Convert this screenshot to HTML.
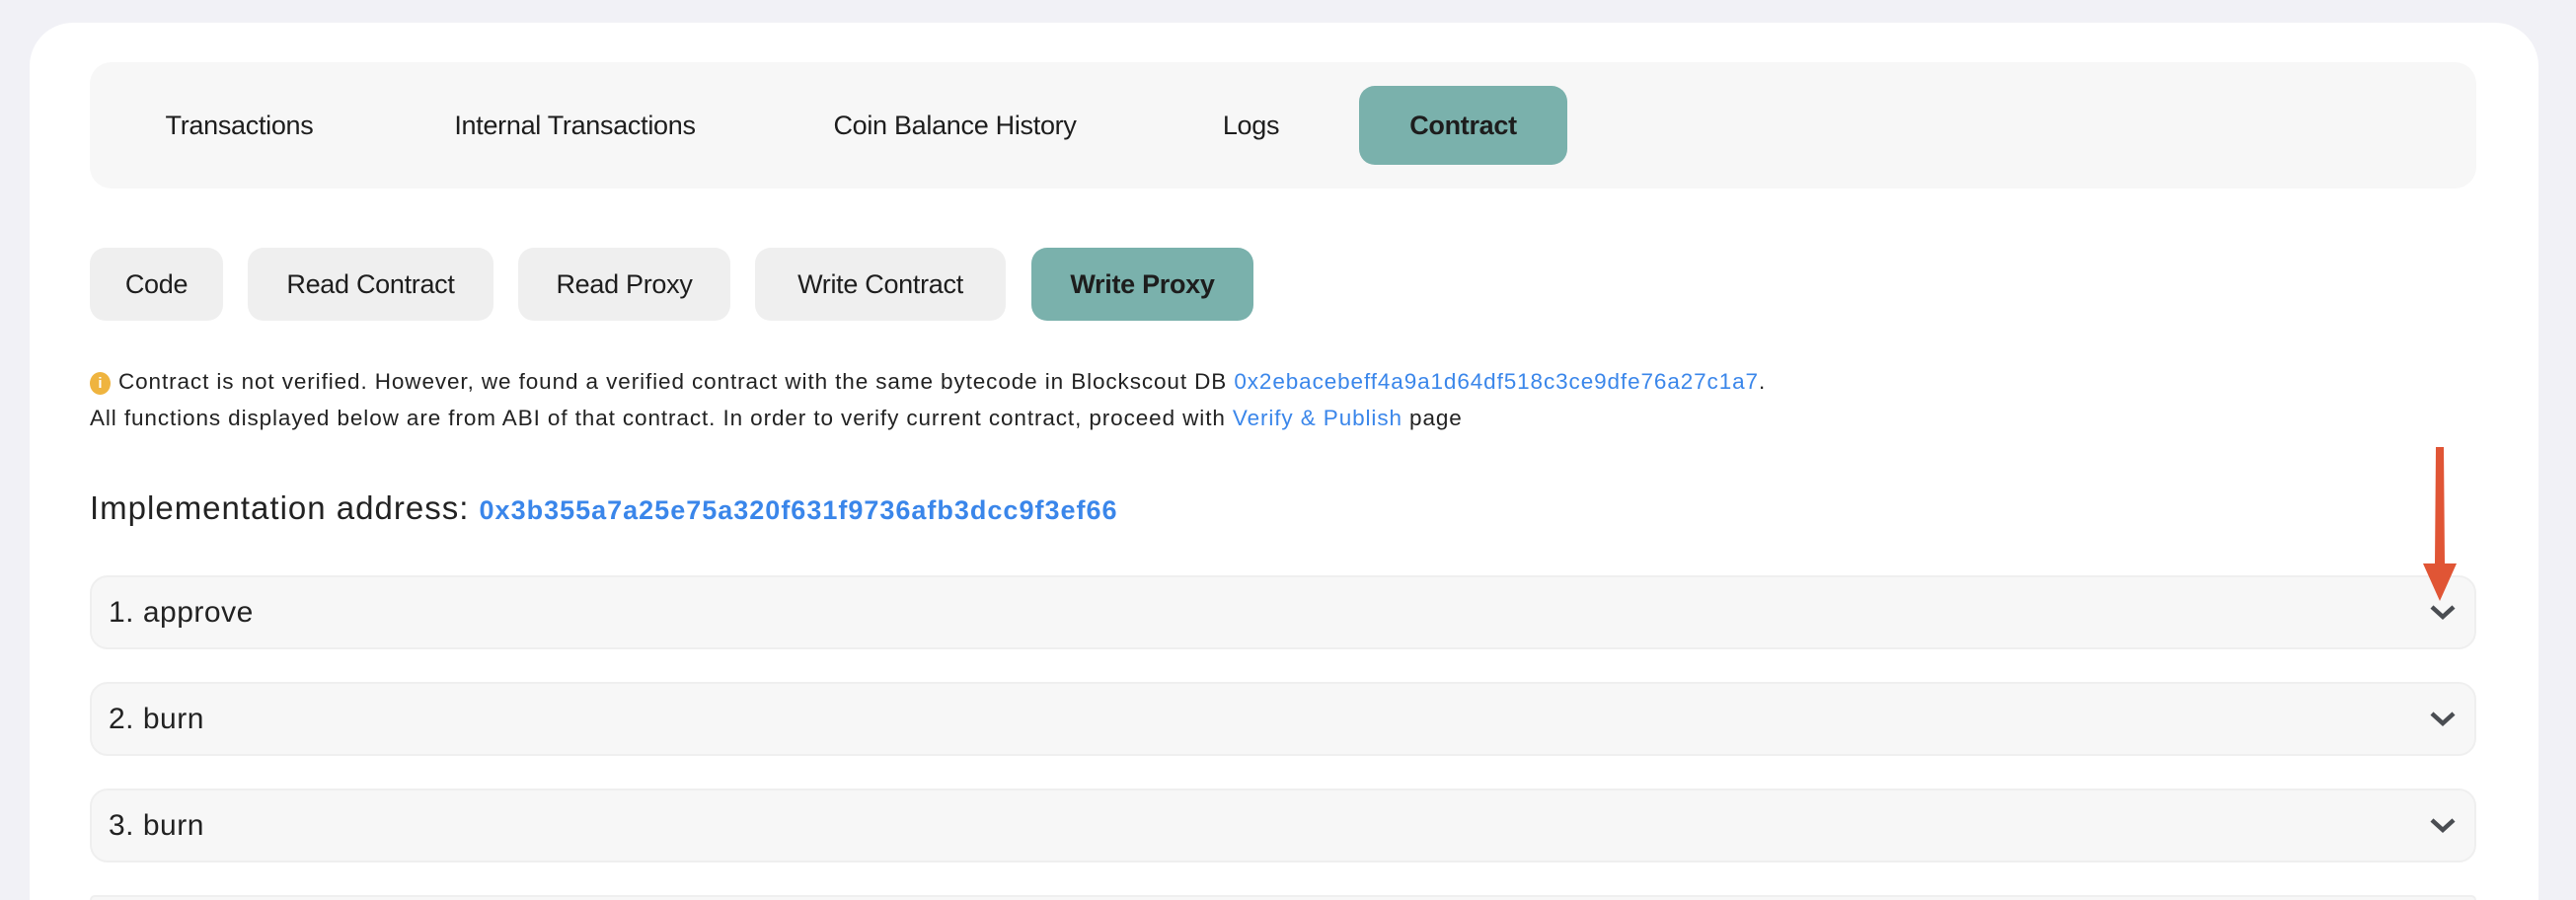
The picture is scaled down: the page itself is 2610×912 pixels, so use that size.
<!DOCTYPE html>
<html style="height:912px;overflow:hidden"><head><meta charset="utf-8"><style>
*{margin:0;padding:0;box-sizing:border-box}
body{width:2610px;height:912px;overflow:hidden;background:#f1f1f6;font-family:"Liberation Sans",sans-serif;color:#222;position:relative}
.card{position:absolute;left:30px;top:23px;width:2542px;height:889px;background:#fff;border-radius:44px 44px 0 0}
.abs{position:absolute}
.bar{left:91px;top:63px;width:2418px;height:128px;background:#f7f7f7;border-radius:22px}
.t{position:absolute;top:87px;height:80px;display:flex;align-items:center;justify-content:center;font-size:27px;color:#1d1d1d;letter-spacing:-0.3px}
.btn{position:absolute;top:251px;height:74px;background:#efefef;border-radius:16px;display:flex;align-items:center;justify-content:center;font-size:27px;color:#1d1d1d;letter-spacing:-0.3px}
.act{background:#7ab1ac;font-weight:bold}
.info{position:absolute;left:91px;font-size:22.5px;color:#222;white-space:nowrap;letter-spacing:0.9px}
a{color:#3a86ea;text-decoration:none}
.acc{position:absolute;left:91px;width:2418px;height:75px;background:#f7f7f7;border:2px solid #efefef;border-radius:18px;overflow:hidden}
.acc span{position:absolute;left:17px;top:0;line-height:71px;font-size:30px;color:#222;letter-spacing:0.5px}
.acc svg{position:absolute;left:2368px;top:25px}
</style></head><body>
<div class="card"></div>
<div class="abs bar"></div>
<div class="t" style="left:150px;width:185px">Transactions</div>
<div class="t" style="left:440px;width:285px">Internal Transactions</div>
<div class="t" style="left:830px;width:275px">Coin Balance History</div>
<div class="t" style="left:1225px;width:85px">Logs</div>
<div class="t act" style="left:1377px;width:211px;border-radius:16px">Contract</div>

<div class="btn" style="left:91px;width:135px">Code</div>
<div class="btn" style="left:251px;width:249px">Read Contract</div>
<div class="btn" style="left:525px;width:215px">Read Proxy</div>
<div class="btn" style="left:765px;width:254px">Write Contract</div>
<div class="btn act" style="left:1045px;width:225px">Write Proxy</div>

<div class="abs" style="left:91px;top:377px;width:21px;height:23px;border-radius:50%;background:#efb43f;color:#fff;font-size:15px;font-weight:bold;text-align:center;line-height:23px">i</div>
<div class="info" style="left:120px;top:374px">Contract is not verified. However, we found a verified contract with the same bytecode in Blockscout DB <a>0x2ebacebeff4a9a1d64df518c3ce9dfe76a27c1a7</a>.</div>
<div class="info" style="top:411px">All functions displayed below are from ABI of that contract. In order to verify current contract, proceed with <a>Verify &amp; Publish</a> page</div>

<div class="abs" style="left:91px;top:496px;font-size:33px;color:#222;white-space:nowrap;letter-spacing:1px">Implementation address: <a style="font-size:27px;font-weight:bold;letter-spacing:1px">0x3b355a7a25e75a320f631f9736afb3dcc9f3ef66</a></div>

<div class="acc" style="top:583px"><span>1. approve</span><svg width="28" height="20" viewBox="0 0 28 20"><path d="M3 5l11 10 11-10" fill="none" stroke="#4a4d52" stroke-width="4.5"/></svg></div>
<div class="acc" style="top:691px"><span>2. burn</span><svg width="28" height="20" viewBox="0 0 28 20"><path d="M3 5l11 10 11-10" fill="none" stroke="#4a4d52" stroke-width="4.5"/></svg></div>
<div class="acc" style="top:799px"><span>3. burn</span><svg width="28" height="20" viewBox="0 0 28 20"><path d="M3 5l11 10 11-10" fill="none" stroke="#4a4d52" stroke-width="4.5"/></svg></div>
<div class="abs" style="top:907px;left:91px;width:2418px;height:5px;background:#f7f7f7;border:2px solid #efefef;border-bottom:none;border-radius:18px 18px 0 0"></div>

<svg class="abs" style="left:2450px;top:451px" width="44" height="160" viewBox="0 0 44 160"><path d="M18 2h8l1 118h12l-17 38-17-38h12z" fill="#e05535"/></svg>
</body></html>
